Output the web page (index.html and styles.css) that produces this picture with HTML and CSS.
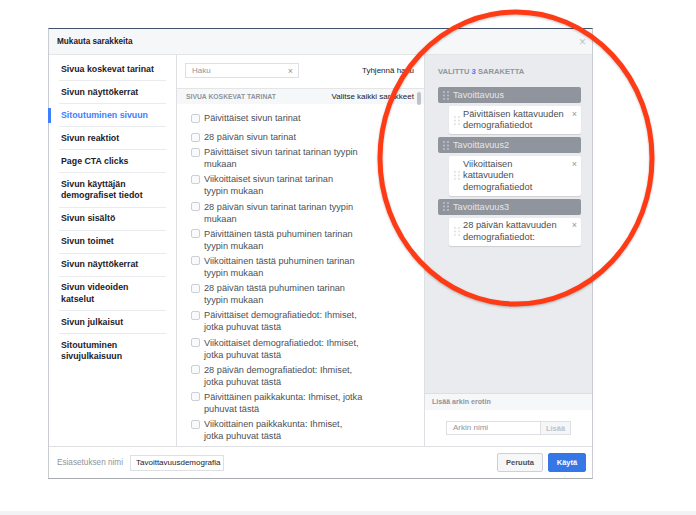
FILE: index.html
```html
<!DOCTYPE html>
<html lang="fi">
<head>
<meta charset="utf-8">
<title>Mukauta sarakkeita</title>
<link rel="stylesheet" href="styles.css">
</head>
<body>
<div class="page">
  <div class="dialog">
    <div class="dlg-head">
      <span class="title">Mukauta sarakkeita</span>
      <span class="close">×</span>
    </div>
    <div class="dlg-body">
      <nav class="side">
        <div class="side-item">Sivua koskevat tarinat</div>
        <div class="side-item">Sivun näyttökerrat</div>
        <div class="side-item active">Sitoutuminen sivuun</div>
        <div class="side-item">Sivun reaktiot</div>
        <div class="side-item">Page CTA clicks</div>
        <div class="side-item">Sivun käyttäjän<br>demografiset tiedot</div>
        <div class="side-item">Sivun sisältö</div>
        <div class="side-item">Sivun toimet</div>
        <div class="side-item">Sivun näyttökerrat</div>
        <div class="side-item">Sivun videoiden<br>katselut</div>
        <div class="side-item">Sivun julkaisut</div>
        <div class="side-item last">Sitoutuminen<br>sivujulkaisuun</div>
      </nav>
      <section class="mid">
        <div class="search-row">
          <div class="search"><span class="ph">Haku</span><span class="sx">×</span></div>
          <span class="clear">Tyhjennä haku</span>
        </div>
        <div class="sec-head">
          <span class="sec-title">SIVUA KOSKEVAT TARINAT</span>
          <span class="sel-all">Valitse kaikki sarakkeet</span>
          <span class="thumb"></span>
        </div>
        <ul class="list">
          <li><span class="cb"></span><span>Päivittäiset sivun tarinat</span></li>
          <li><span class="cb"></span><span>28 päivän sivun tarinat</span></li>
          <li><span class="cb"></span><span>Päivittäiset sivun tarinat tarinan tyypin<br>mukaan</span></li>
          <li><span class="cb"></span><span>Viikoittaiset sivun tarinat tarinan<br>tyypin mukaan</span></li>
          <li><span class="cb"></span><span>28 päivän sivun tarinat tarinan tyypin<br>mukaan</span></li>
          <li><span class="cb"></span><span>Päivittäinen tästä puhuminen tarinan<br>tyypin mukaan</span></li>
          <li><span class="cb"></span><span>Viikoittainen tästä puhuminen tarinan<br>tyypin mukaan</span></li>
          <li><span class="cb"></span><span>28 päivän tästä puhuminen tarinan<br>tyypin mukaan</span></li>
          <li><span class="cb"></span><span>Päivittäiset demografiatiedot: Ihmiset,<br>jotka puhuvat tästä</span></li>
          <li><span class="cb"></span><span>Viikoittaiset demografiatiedot: Ihmiset,<br>jotka puhuvat tästä</span></li>
          <li><span class="cb"></span><span>28 päivän demografiatiedot: Ihmiset,<br>jotka puhuvat tästä</span></li>
          <li><span class="cb"></span><span>Päivittäinen paikkakunta: Ihmiset, jotka<br>puhuvat tästä</span></li>
          <li><span class="cb"></span><span>Viikoittainen paikkakunta: Ihmiset,<br>jotka puhuvat tästä</span></li>
        </ul>
      </section>
      <aside class="right">
        <div class="sel">
          <div class="sel-title">VALITTU <span class="num">3</span> SARAKETTA</div>

          <div class="grp-head">
            <svg class="dots" width="6" height="9" viewBox="0 0 6 9"><circle cx="1" cy="1" r="0.9"/><circle cx="5" cy="1" r="0.9"/><circle cx="1" cy="4.5" r="0.9"/><circle cx="5" cy="4.5" r="0.9"/><circle cx="1" cy="8" r="0.9"/><circle cx="5" cy="8" r="0.9"/></svg>
            <span>Tavoittavuus</span>
          </div>
          <div class="card">
            <svg class="dots" width="6" height="9" viewBox="0 0 6 9"><circle cx="1" cy="1" r="0.9"/><circle cx="5" cy="1" r="0.9"/><circle cx="1" cy="4.5" r="0.9"/><circle cx="5" cy="4.5" r="0.9"/><circle cx="1" cy="8" r="0.9"/><circle cx="5" cy="8" r="0.9"/></svg>
            <span class="card-text">Päivittäisen kattavuuden<br>demografiatiedot</span>
            <span class="cx">×</span>
          </div>

          <div class="grp-head">
            <svg class="dots" width="6" height="9" viewBox="0 0 6 9"><circle cx="1" cy="1" r="0.9"/><circle cx="5" cy="1" r="0.9"/><circle cx="1" cy="4.5" r="0.9"/><circle cx="5" cy="4.5" r="0.9"/><circle cx="1" cy="8" r="0.9"/><circle cx="5" cy="8" r="0.9"/></svg>
            <span>Tavoittavuus2</span>
          </div>
          <div class="card">
            <svg class="dots" width="6" height="9" viewBox="0 0 6 9"><circle cx="1" cy="1" r="0.9"/><circle cx="5" cy="1" r="0.9"/><circle cx="1" cy="4.5" r="0.9"/><circle cx="5" cy="4.5" r="0.9"/><circle cx="1" cy="8" r="0.9"/><circle cx="5" cy="8" r="0.9"/></svg>
            <span class="card-text">Viikoittaisen<br>kattavuuden<br>demografiatiedot</span>
            <span class="cx">×</span>
          </div>

          <div class="grp-head">
            <svg class="dots" width="6" height="9" viewBox="0 0 6 9"><circle cx="1" cy="1" r="0.9"/><circle cx="5" cy="1" r="0.9"/><circle cx="1" cy="4.5" r="0.9"/><circle cx="5" cy="4.5" r="0.9"/><circle cx="1" cy="8" r="0.9"/><circle cx="5" cy="8" r="0.9"/></svg>
            <span>Tavoittavuus3</span>
          </div>
          <div class="card">
            <svg class="dots" width="6" height="9" viewBox="0 0 6 9"><circle cx="1" cy="1" r="0.9"/><circle cx="5" cy="1" r="0.9"/><circle cx="1" cy="4.5" r="0.9"/><circle cx="5" cy="4.5" r="0.9"/><circle cx="1" cy="8" r="0.9"/><circle cx="5" cy="8" r="0.9"/></svg>
            <span class="card-text">28 päivän kattavuuden<br>demografiatiedot:</span>
            <span class="cx">×</span>
          </div>
        </div>
        <div class="sep-head">Lisää arkin erotin</div>
        <div class="sep-body">
          <span class="ti">Arkin nimi</span><span class="btn-add">Lisää</span>
        </div>
      </aside>
    </div>
    <div class="dlg-foot">
      <span class="preset-label">Esiasetuksen nimi</span>
      <span class="preset-input">Tavoittavuusdemografia</span>
      <span class="spacer"></span>
      <span class="btn btn-cancel">Peruuta</span>
      <span class="btn btn-ok">Käytä</span>
    </div>
  </div>
</div>
<div class="strip"></div>
<svg class="annot" width="696" height="515" viewBox="0 0 696 515">
  <ellipse cx="516" cy="158" rx="136" ry="146" fill="none" stroke="#ff3b15" stroke-width="5"/>
</svg>
</body>
</html>
```

FILE: styles.css
```css
* { box-sizing: border-box; }
html, body { margin: 0; padding: 0; }
body {
  width: 696px;
  height: 515px;
  overflow: hidden;
  position: relative;
  background: #fff;
  font-family: "Liberation Sans", Arial, sans-serif;
  color: #1d2129;
}
.page { padding: 28px 0 0 48px; }
.dialog {
  width: 545px;
  border: 1px solid #c9ccd1;
  border-top-color: #44516b;
  border-bottom-color: #a8abb0;
  background: #fff;
  display: flex;
  flex-direction: column;
}
.dlg-head {
  height: 26px;
  background: #f6f7f9;
  border-bottom: 1px solid #e5e5e5;
  display: flex;
  align-items: center;
  justify-content: space-between;
  padding: 0 6px 0 8px;
}
.title { font-weight: bold; font-size: 8.2px; color: #1d2129; }
.close { font-size: 12px; color: #bec3c9; line-height: 12px; }

.dlg-body { display: flex; height: 391px; }

/* sidebar */
.side {
  width: 128px;
  flex: none;
  border-right: 1px solid #dddfe2;
  padding: 3px 10px 0;
}
.side-item {
  position: relative;
  padding: 5.5px 2px 5px;
  border-bottom: 1px solid #e9ebee;
  font-weight: bold;
  font-size: 8.8px;
  line-height: 11.5px;
  color: #1d2129;
}
.side-item.last { border-bottom: none; }
.side-item.active { color: #4080ff; }
.side-item.active::before {
  content: "";
  position: absolute;
  left: -11px;
  top: 4px;
  bottom: 3px;
  width: 3px;
  background: #4080ff;
}

/* middle column */
.mid { width: 247px; flex: none; display: flex; flex-direction: column; }
.search-row {
  height: 34px;
  flex: none;
  border-bottom: 1px solid #e5e5e5;
  display: flex;
  justify-content: space-between;
  align-items: flex-start;
  padding: 8px 10px 0 8px;
}
.search {
  width: 114px;
  height: 15px;
  border: 1px solid #dddfe2;
  display: flex;
  align-items: center;
  justify-content: space-between;
  padding: 0 5px 0 6px;
  font-size: 8px;
  color: #90949c;
}
.sx { font-size: 9px; color: #90949c; }
.clear { font-size: 8px; line-height: 16px; color: #1d2129; }
.sec-head {
  height: 15px;
  flex: none;
  background: #f6f7f9;
  display: flex;
  align-items: center;
  padding: 0 3px 0 9px;
}
.sec-title { flex: 1; font-weight: bold; font-size: 6.8px; color: #90949c; }
.sel-all { font-size: 8px; color: #1d2129; }
.thumb {
  width: 4px;
  height: 13px;
  margin-left: 3px;
  align-self: flex-start;
  margin-top: 3px;
  border-radius: 2px;
  background: #bec3c9;
}
.list {
  list-style: none;
  margin: 0;
  padding: 8px 0 0 14px;
  flex: 1;
  overflow: hidden;
}
.list li {
  display: flex;
  align-items: flex-start;
  gap: 4px;
  font-size: 9.2px;
  line-height: 12px;
  color: #4b4f56;
  margin-bottom: 3.2px;
  white-space: nowrap;
}
.list li:first-child { margin-bottom: 7px; }
.cb {
  width: 9px;
  height: 9px;
  flex: none;
  margin-top: 1.5px;
  border: 1px solid #ccd0d5;
  border-radius: 2px;
  background: #f9fafb;
}

/* right column */
.right {
  flex: 1;
  background: #e9ebee;
  border-left: 1px solid #dddfe2;
  display: flex;
  flex-direction: column;
}
.sel { flex: 1; padding: 12px 11px 0 13px; }
.sel-title {
  font-weight: bold;
  font-size: 7.6px;
  line-height: 10px;
  color: #90949c;
  margin-bottom: 10px;
}
.num { color: #4080ff; }
.grp-head {
  height: 16px;
  background: #90949c;
  border-radius: 2px;
  display: flex;
  align-items: center;
  gap: 4px;
  padding-left: 5px;
  color: #e4e6ea;
  font-size: 9.2px;
}
.grp-head .dots { fill: #c4c7cc; flex: none; }
.card {
  margin: 3px 0 3px 11px;
  background: #fff;
  border-radius: 2px;
  box-shadow: 0 1px 1px rgba(0, 0, 0, 0.12);
  display: flex;
  align-items: flex-start;
  gap: 3px;
  padding: 2.5px 4px 2.5px 5px;
  font-size: 9.3px;
  line-height: 11.5px;
  color: #4b4f56;
}
.card .dots { fill: #dadde1; flex: none; align-self: center; }
.card-text { flex: 1; white-space: nowrap; }
.cx { font-size: 9px; color: #90949c; line-height: 11.5px; }
.sep-head {
  height: 17px;
  flex: none;
  background: #f6f7f9;
  border-top: 1px solid #dddfe2;
  display: flex;
  align-items: center;
  padding-left: 7px;
  font-weight: bold;
  font-size: 7.1px;
  color: #90949c;
}
.sep-body {
  height: 36px;
  flex: none;
  background: #fff;
  display: flex;
  justify-content: center;
  align-items: center;
}
.ti {
  width: 95px;
  height: 14px;
  border: 1px solid #dddfe2;
  background: #fff;
  font-size: 8px;
  line-height: 12px;
  color: #90949c;
  padding-left: 6px;
}
.btn-add {
  width: 30px;
  height: 14px;
  background: #f5f6f7;
  border: 1px solid #dddfe2;
  border-left: none;
  font-weight: bold;
  font-size: 7.5px;
  color: #bec3c9;
  display: flex;
  align-items: center;
  justify-content: center;
}

/* footer */
.dlg-foot {
  height: 32px;
  border-top: 1px solid #dddfe2;
  display: flex;
  align-items: center;
  padding: 0 6px 0 8px;
}
.preset-label { font-size: 8.2px; color: #90949c; margin-right: 7px; }
.preset-input {
  width: 94px;
  height: 16px;
  border: 1px solid #dddfe2;
  font-size: 8px;
  line-height: 14px;
  color: #1d2129;
  padding: 0 0 0 5px;
  white-space: nowrap;
}
.spacer { flex: 1; }
.btn {
  height: 19px;
  border-radius: 2px;
  font-weight: bold;
  font-size: 7.5px;
  display: flex;
  align-items: center;
  justify-content: center;
}
.btn-cancel {
  width: 46px;
  background: #f6f7f9;
  border: 1px solid #ced0d4;
  color: #4b4f56;
  margin-right: 5px;
}
.btn-ok {
  width: 38px;
  background: #3578e5;
  border: 1px solid #3578e5;
  color: #fff;
}

.strip { margin-top: 32px; height: 4px; background: #f2f3f4; }

.annot {
  position: absolute;
  left: 0;
  top: 0;
  pointer-events: none;
  filter: drop-shadow(0 1px 1px rgba(0, 0, 0, 0.25));
}
```
